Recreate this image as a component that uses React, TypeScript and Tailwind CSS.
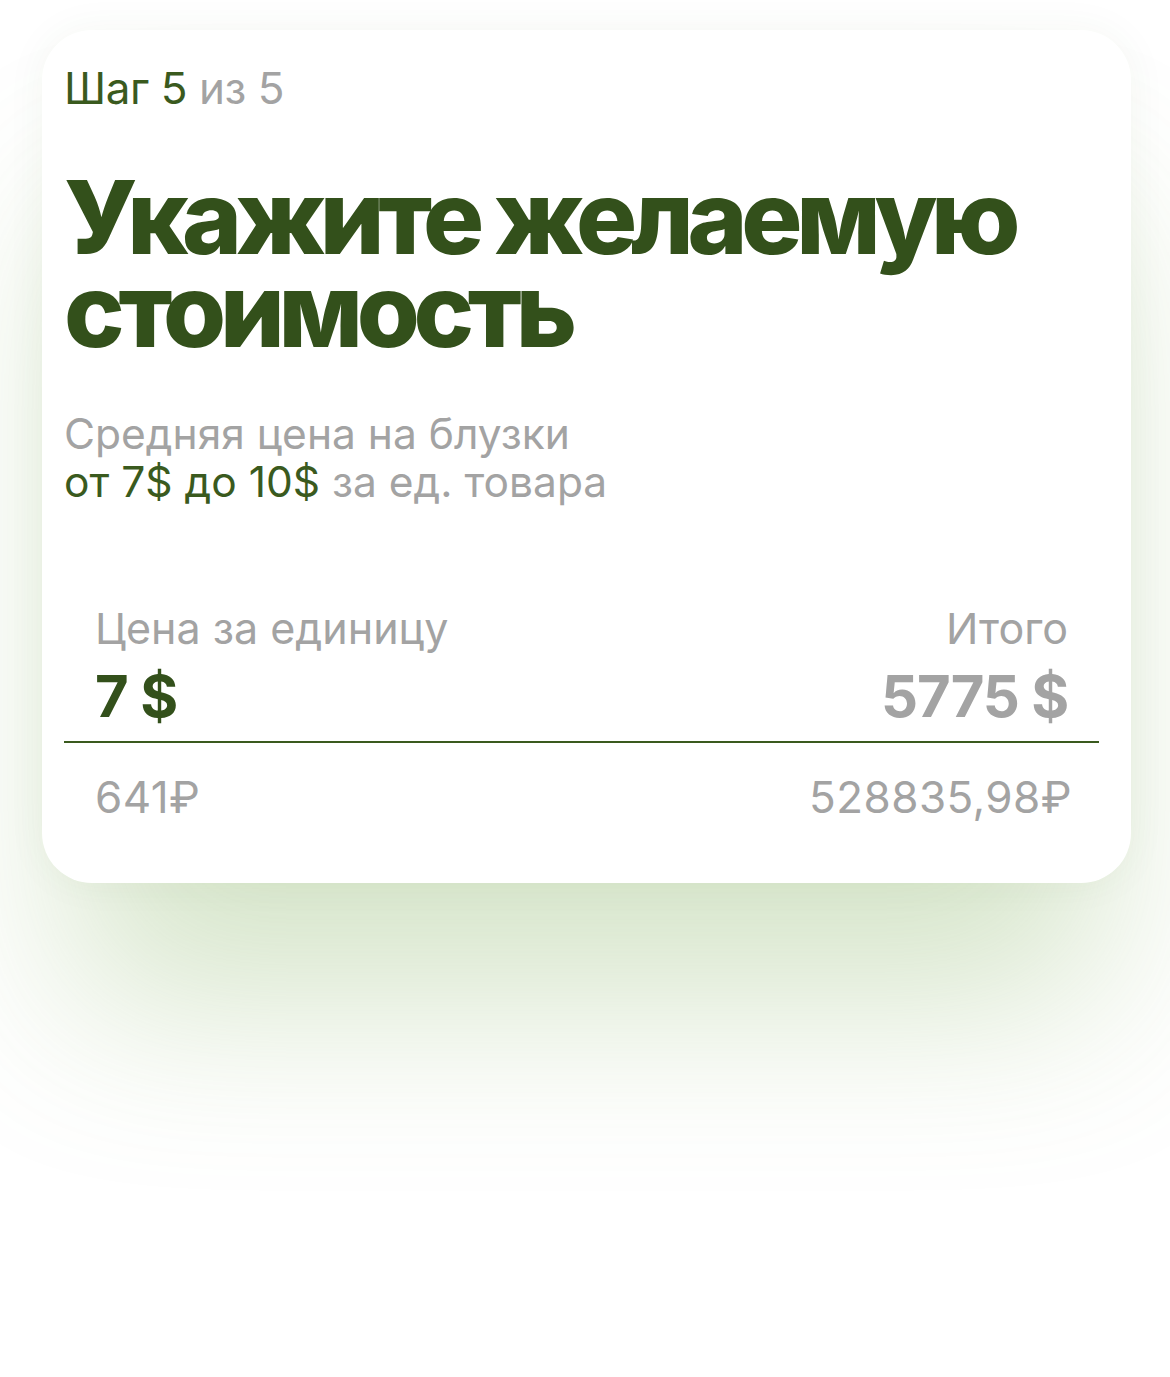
export default function App() {
  return (
    <div
      className="min-h-[1377px] w-full bg-white pt-[30px] pl-[42px] pr-[39px]"
      style={{ fontFamily: "Inter, 'Noto Sans', sans-serif" }}
    >
      <div className="rounded-[50px] bg-white pt-[30px] pb-[62px] pl-[22px] pr-[32px] shadow-[0_150px_180px_-30px_rgba(120,170,80,0.3),0_0_40px_rgba(60,90,40,0.05)]">
        <div className="text-[44px] leading-[56px] tracking-[-0.01em]">
          <span className="text-[#3a5a1e]">Шаг 5</span>{" "}
          <span className="text-[#a3a3a3]">из 5</span>
        </div>

        <h1 className="mt-[55px] text-[102px] leading-[93px] font-extrabold tracking-[-0.062em] text-[#33501b]">
          Укажите желаемую
          <br />
          стоимость
        </h1>

        <p className="mt-[53px] text-[42.5px] leading-[48px] text-[#a3a3a3]">
          Средняя цена на блузки
          <br />
          <span className="text-[#3a5a1e]">от 7$ до 10$</span> за ед. товара
        </p>

        <div className="mt-[98px]">
          <div className="flex items-start justify-between px-[31px] border-b-2 border-[#3a5a1e] pb-[13px]">
            <div className="flex flex-col">
              <span className="text-[43px] leading-[48px] text-[#a3a3a3]">
                Цена за единицу
              </span>
              <span className="mt-[12px] text-[58px] leading-[64px] font-bold tracking-[-0.02em] text-[#33501b]">
                7 $
              </span>
            </div>
            <div className="flex flex-col items-end">
              <span className="text-[43px] leading-[48px] text-[#a3a3a3]">
                Итого
              </span>
              <span className="mt-[12px] text-[58px] leading-[64px] font-bold tracking-[-0.02em] text-[#a3a3a3]">
                5775 $
              </span>
            </div>
          </div>
          <div className="mt-[30px] flex items-center justify-between pl-[31px] pr-[27px] text-[44px] leading-[48px] tracking-[0.01em] text-[#a3a3a3]">
            <span>641₽</span>
            <span>528835,98₽</span>
          </div>
        </div>
      </div>
    </div>
  );
}
